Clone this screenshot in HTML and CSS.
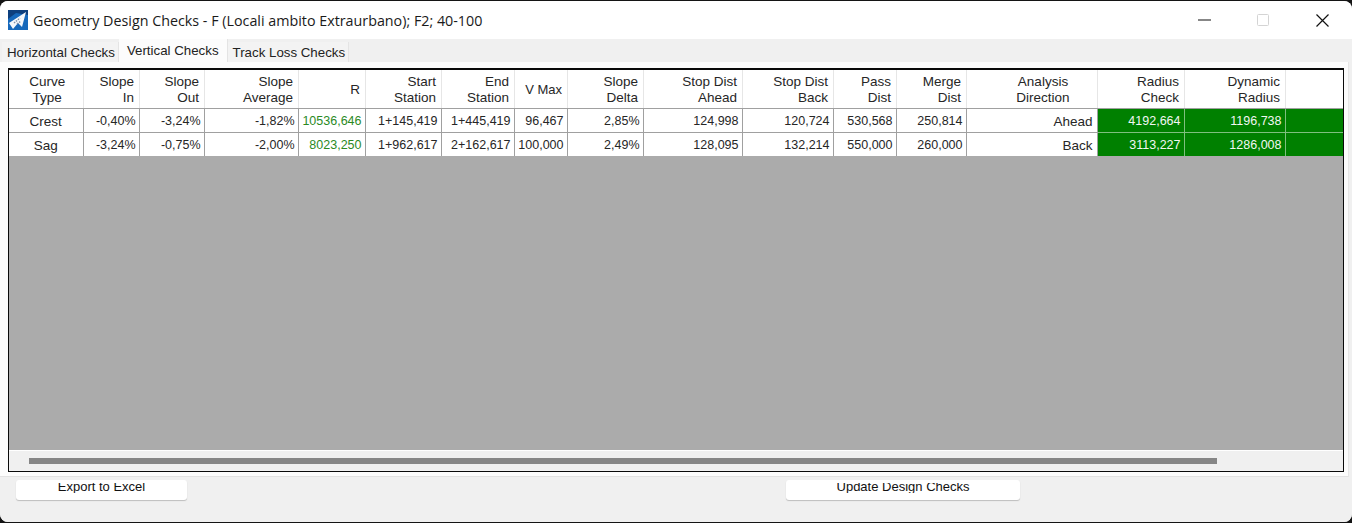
FILE: index.html
```html
<!DOCTYPE html>
<html lang="en">
<head>
<meta charset="utf-8">
<title>Geometry Design Checks</title>
<link rel="stylesheet" href="styles.css">
</head>
<body>
<div class="window">
  <header class="titlebar">
    <svg class="app-icon" viewBox="0 0 20 20" aria-hidden="true">
      <rect width="20" height="20" fill="#1668bb"/>
      <path d="M0 0H20V5L8 3L0 9Z" fill="#0d3f7e"/>
      <path d="M1 13L18 2L14 17L10 13L5 19Z" fill="#f4f7fb"/>
      <path d="M6 13L12 8M9 14L13 11" stroke="#7f8fa8" stroke-width="1.4" stroke-dasharray="1.5 1"/>
    </svg>
    <span class="title">Geometry Design Checks - F (Locali ambito Extraurbano); F2; 40-100</span>
    <div class="controls">
      <svg class="ctl" viewBox="0 0 46 30"><path d="M17 15H30" stroke="#111" stroke-width="1.2"/></svg>
      <svg class="ctl" viewBox="0 0 46 30"><rect x="17.5" y="9.5" width="11" height="11" rx="1" fill="none" stroke="#d4d4d4"/></svg>
      <svg class="ctl" viewBox="0 0 46 30"><path d="M17.5 9.5L29.5 21.5M29.5 9.5L17.5 21.5" stroke="#111" stroke-width="1.2"/></svg>
    </div>
  </header>

  <nav class="tabs">
    <span class="tab">Horizontal Checks</span>
    <span class="tab tab-active">Vertical Checks</span>
    <span class="tab">Track Loss Checks</span>
  </nav>

  <main class="panel">
    <div class="grid-frame">
      <table class="grid">
        <colgroup>
          <col class="c1"><col class="c2"><col class="c3"><col class="c4"><col class="c5"><col class="c6"><col class="c7"><col class="c8"><col class="c9"><col class="c10"><col class="c11"><col class="c12"><col class="c13"><col class="c14"><col class="c15"><col class="c16"><col>
        </colgroup>
        <thead>
          <tr>
            <th class="ctr">Curve<br>Type</th>
            <th>Slope<br>In</th>
            <th>Slope<br>Out</th>
            <th>Slope<br>Average</th>
            <th>R</th>
            <th>Start<br>Station</th>
            <th>End<br>Station</th>
            <th class="tight">V Max</th>
            <th>Slope<br>Delta</th>
            <th>Stop Dist<br>Ahead</th>
            <th>Stop Dist<br>Back</th>
            <th>Pass<br>Dist</th>
            <th>Merge<br>Dist</th>
            <th class="dir">Analysis<br>Direction</th>
            <th>Radius<br>Check</th>
            <th>Dynamic<br>Radius</th>
            <th class="filler"></th>
          </tr>
        </thead>
        <tbody>
          <tr>
            <td class="ctr word">Crest</td><td>-0,40%</td><td>-3,24%</td><td>-1,82%</td><td class="ok-text">10536,646</td><td>1+145,419</td><td>1+445,419</td><td>96,467</td><td>2,85%</td><td>124,998</td><td>120,724</td><td>530,568</td><td>250,814</td><td class="word">Ahead</td><td class="ok-cell">4192,664</td><td class="ok-cell">1196,738</td><td class="ok-cell"></td>
          </tr>
          <tr>
            <td class="ctr word">Sag</td><td>-3,24%</td><td>-0,75%</td><td>-2,00%</td><td class="ok-text">8023,250</td><td>1+962,617</td><td>2+162,617</td><td>100,000</td><td>2,49%</td><td>128,095</td><td>132,214</td><td>550,000</td><td>260,000</td><td class="word">Back</td><td class="ok-cell">3113,227</td><td class="ok-cell">1286,008</td><td class="ok-cell"></td>
          </tr>
        </tbody>
      </table>
      <div class="grid-empty"></div>
      <div class="hscroll"><div class="hthumb"></div></div>
    </div>
  </main>

  <footer class="actions">
    <button class="btn btn-export" type="button"><span>Export to Excel</span></button>
    <button class="btn btn-update" type="button"><span>Update Design Checks</span></button>
  </footer>
</div>
</body>
</html>
```
FILE: styles.css
```css
* { box-sizing: border-box; }
html, body { margin: 0; height: 100%; }
body {
  background: #141414;
  padding: 1px 0 1px;
  overflow: hidden;
  font-family: "Liberation Sans", Arial, sans-serif;
  color: #111;
}
.window {
  height: 521px;
  background: #f0f0f0;
  border-radius: 8px;
  overflow: hidden;
  display: flex;
  flex-direction: column;
}
.titlebar {
  height: 38px;
  flex: none;
  background: #fff;
  display: flex;
  align-items: center;
  padding-left: 8px;
}
.app-icon { width: 20px; height: 20px; flex: none; margin-right: 5px; }
.title {
  font-family: "Open Sans", "Noto Sans", sans-serif;
  font-size: 14.3px;
  color: #1a1a1a;
  white-space: nowrap;
}
.controls { margin-left: auto; display: flex; padding-right: 7px; gap: 13px; }
.ctl { width: 46px; height: 30px; display: block; }
.tabs {
  height: 23px;
  flex: none;
  display: flex;
  align-items: flex-end;
  padding-left: 2px;
  background: #f0f0f0;
  font-size: 13.3px;
  white-space: nowrap;
}
.tab {
  height: 20px;
  line-height: 21px;
  padding: 0 3px 0 5px;
  background: #f3f3f3;
  border-right: 1px solid #e4e4e4;
  color: #222;
}
.tab-active {
  height: 23px;
  line-height: 23px;
  background: #fcfcfc;
  padding: 0 8px;
}
.tab-active + .tab { padding-left: 5px; }
.panel {
  height: 415px;
  flex: none;
  margin-right: 3px;
  background: #fcfcfc;
  border-bottom: 1px solid #e2e2e2;
  border-right: 1px solid #e6e6e6;
  padding: 6px 4px 5px 8px;
}
.grid-frame {
  height: 404px;
  border: 1px solid #0a0a0a;
  border-top-width: 2px;
  background: #ababab;
  display: flex;
  flex-direction: column;
}
.grid {
  border-collapse: collapse;
  table-layout: fixed;
  width: 1334px;
  flex: none;
  font-size: 12.5px;
  color: #262626;
  background: #fff;
}
.c1 { width: 74px; }
.c2 { width: 56px; }
.c3 { width: 65px; }
.c4 { width: 94px; }
.c5 { width: 67px; }
.c6 { width: 76px; }
.c7 { width: 73px; }
.c8 { width: 53px; }
.c9 { width: 76px; }
.c10 { width: 99px; }
.c11 { width: 91px; }
.c12 { width: 63px; }
.c13 { width: 70px; }
.c14 { width: 131px; }
.c15 { width: 87px; }
.c16 { width: 101px; }
th, td {
  text-align: right;
  font-weight: 400;
  white-space: nowrap;
  overflow: hidden;
}
th {
  height: 38px;
  padding: 2px 4.5px 0 0;
  font-size: 13.5px;
  line-height: 16px;
  border-right: 1px solid #e6e6e6;
  border-bottom: 1px solid #a0a0a0;
}
th.tight { font-size: 13px; }
td {
  height: 24px;
  padding: 2px 3px 0 0;
  border-right: 1px solid #a0a0a0;
  border-bottom: 1px solid #a0a0a0;
}
td.word { font-size: 13.5px; padding-right: 4px; }
tr > :last-child { border-right: 0; }
th.ctr { text-align: center; padding: 2px 0 0 3px; }
td.ctr { text-align: center; padding-right: 0; }
th.dir { text-align: center; padding: 2px 0 0 23px; }
.ok-text { color: #2b8a1f; }
.ok-cell {
  background: #008000;
  color: #f2f7f2;
  border-right-color: #7fbf7f;
  border-bottom-color: #7fbf7f;
}
tbody tr:last-child td { border-bottom: 0; }
.grid-empty { flex: 1; }
.hscroll {
  height: 21px;
  flex: none;
  background: #f0f0f0;
  border-top: 1px solid #fff;
  padding: 7px 0 0 20px;
}
.hthumb { width: 1188px; height: 6px; background: #868686; }
.actions {
  flex: 1;
  display: flex;
  align-items: flex-start;
  padding: 3px 0 0 16px;
  background: #f0f0f0;
}
.btn {
  height: 20px;
  padding: 3px 0 7px;
  border: 0;
  border-radius: 3px;
  background: #fff;
  box-shadow: 0 1px 1px #bdbdbd;
  font: 13px "Liberation Sans", Arial, sans-serif;
  color: #111;
  display: block;
}
.btn span { display: block; height: 10px; line-height: 7px; overflow: hidden; }
.btn-export { width: 171px; }
.btn-update { width: 234px; margin-left: 599px; }
```
